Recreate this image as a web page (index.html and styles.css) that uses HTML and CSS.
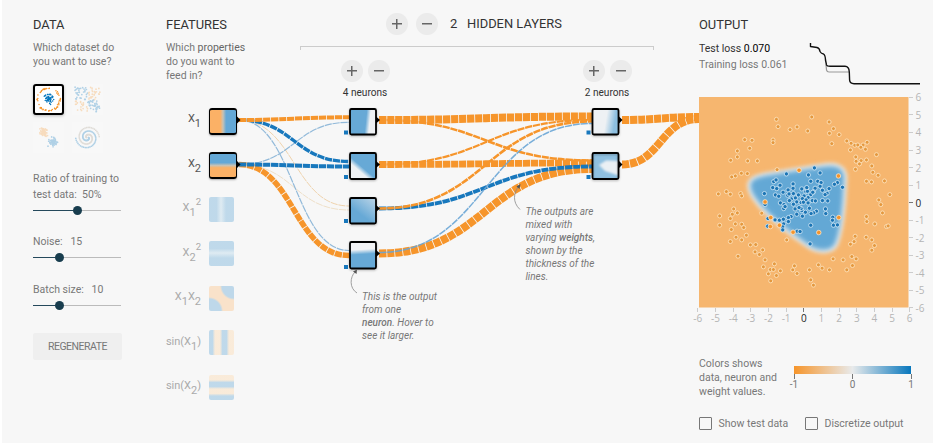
FILE: index.html
```html
<!DOCTYPE html>
<html lang="en">
<head>
<meta charset="utf-8">
<title>Neural network playground</title>
<link rel="stylesheet" href="styles.css">
</head>
<body>
<main class="playground">
  <section class="data">
    <h2>Data</h2>
    <p class="intro">Which dataset do<br>you want to use?</p>
    <div class="datasets">
      <svg class="thumb selected" data-set="circle" viewBox="0 0 31 31"></svg>
      <svg class="thumb" data-set="xor" viewBox="0 0 31 31"></svg>
      <svg class="thumb" data-set="gauss" viewBox="0 0 31 31"></svg>
      <svg class="thumb" data-set="spiral" viewBox="0 0 31 31"></svg>
    </div>
    <div class="control ratio">
      <label>Ratio of training to<br>test data:&nbsp; 50%</label>
      <div class="slider"><i class="fill half"></i><i class="knob"></i></div>
    </div>
    <div class="control noise">
      <label>Noise:&nbsp; &nbsp;15</label>
      <div class="slider"><i class="fill third"></i><i class="knob"></i></div>
    </div>
    <div class="control batch">
      <label>Batch size:&nbsp; &nbsp;10</label>
      <div class="slider"><i class="fill third"></i><i class="knob"></i></div>
    </div>
    <button class="regenerate">REGENERATE</button>
  </section>

  <section class="features">
    <h2>Features</h2>
    <p class="intro">Which <b>properties</b><br>do you want to<br>feed in?</p>
    <ul class="feature-list">
      <li class="on"><span>X<sub>1</sub></span><i class="tile x1"></i></li>
      <li class="on"><span>X<sub>2</sub></span><i class="tile x2"></i></li>
      <li><span>X<sub>1</sub><sup>2</sup></span><i class="tile x1sq"></i></li>
      <li><span>X<sub>2</sub><sup>2</sup></span><i class="tile x2sq"></i></li>
      <li><span>X<sub>1</sub>X<sub>2</sub></span><i class="tile x1x2"></i></li>
      <li><span>sin(X<sub>1</sub>)</span><i class="tile sin1"></i></li>
      <li><span>sin(X<sub>2</sub>)</span><i class="tile sin2"></i></li>
    </ul>
  </section>

  <section class="network">
    <div class="layers-head">
      <span class="round plus"></span><span class="round"></span>
      <span class="count">2</span><h2>Hidden layers</h2>
    </div>
    <div class="bracket"></div>
    <div class="layer-controls">
      <div class="layer"><div class="pair"><span class="round plus"></span><span class="round"></span></div><p>4 neurons</p></div>
      <div class="layer"><div class="pair"><span class="round plus"></span><span class="round"></span></div><p>2 neurons</p></div>
    </div>
  </section>

  <section class="output">
    <h2>Output</h2>
    <div class="loss">
      <div class="figures"><p class="test">Test loss <b>0.070</b></p><p class="train">Training loss 0.061</p></div>
      <svg class="loss-chart" viewBox="0 0 112 46">
        <path class="train-line" d="M18 24.500L18.500 30Q19 32 21 32H41"/>
        <path class="test-line" d="M2.500 3V6.500L9 7.500Q11.500 8 12 11.500Q13 13.500 15.500 14Q17.300 15 17.500 20L18.500 25Q19 26.300 22 26.300H37Q41 26.400 41.300 32L41.600 40Q41.900 43.700 46 43.700H112"/>
      </svg>
    </div>
    <div class="plot">
      <svg class="heatmap" viewBox="27 37 628 632" preserveAspectRatio="none">
        <defs>
          <filter id="soft" x="-20%" y="-20%" width="140%" height="140%"><feGaussianBlur stdDeviation="6"/></filter>
          <filter id="softer" x="-20%" y="-20%" width="140%" height="140%"><feGaussianBlur stdDeviation="8"/></filter>
        </defs>
        <rect x="27" y="37" width="628" height="632" fill="#f6b66f"/>
        <path class="edge" filter="url(#soft)" d="M181 303C180 286 200 278 228 273L400 246C442 240 462 252 462 280L458 350C453 410 447 450 434 480C422 500 392 500 366 488C318 457 253 406 213 362C196 340 182 325 181 303Z"/>
        <path class="zone" filter="url(#softer)" d="M181 303C180 286 200 278 228 273L400 246C442 240 462 252 462 280L458 350C453 410 447 450 434 480C422 500 392 500 366 488C318 457 253 406 213 362C196 340 182 325 181 303Z"/>
        <g id="points"></g>
      </svg>
      <div class="y-axis" id="y-axis"></div>
      <div class="x-axis" id="x-axis"></div>
    </div>
    <div class="legend">
      <p>Colors shows<br>data, neuron and<br>weight values.</p>
      <div class="scale"><div class="bar"></div><div class="marks"><span>-1</span><span>0</span><span>1</span></div></div>
    </div>
    <div class="options">
      <label><i class="box"></i>Show test data</label>
      <label><i class="box"></i>Discretize output</label>
    </div>
  </section>

  <svg class="diagram" viewBox="0 0 933 443">
    <defs>
      <linearGradient id="n1" x1="0" y1=".45" x2="1" y2=".55"><stop offset=".6" stop-color="#67a9d6"/><stop offset=".76" stop-color="#eef1f4"/></linearGradient>
      <linearGradient id="n2" x1=".15" y1=".9" x2=".75" y2=".2"><stop offset=".32" stop-color="#edf1f4"/><stop offset=".52" stop-color="#67a9d6"/></linearGradient>
      <linearGradient id="n3" x1=".3" y1="1" x2="1" y2=".1"><stop offset=".3" stop-color="#67a9d6"/><stop offset="1" stop-color="#b6d2e6"/></linearGradient>
      <linearGradient id="n4" x1=".47" y1="0" x2=".53" y2="1"><stop offset=".28" stop-color="#f2f3f5"/><stop offset=".46" stop-color="#67a9d6"/></linearGradient>
      <linearGradient id="m1" x1="0" y1=".42" x2="1" y2=".58"><stop offset=".5" stop-color="#eef1f4"/><stop offset=".85" stop-color="#8dbfe0"/></linearGradient>
      <filter id="blur"><feGaussianBlur stdDeviation="1.300"/></filter>
      <clipPath id="m2clip"><rect x="593" y="153" width="26" height="26"/></clipPath>
    </defs>
    <g id="links"></g>
    <g class="connectors">
      <path d="M237 116.500L240.500 120L237 123.500Z"/><path d="M237 161L240.500 164.500L237 168Z"/>
      <path d="M376 116.500L380 120L376 123.500Z"/><path d="M376 161L380 164.500L376 168Z"/>
      <path d="M376 205L380 208.500L376 212Z"/><path d="M376 250L380 253.500L376 257Z"/>
      <path d="M619 116.500L622.500 120L619 123.500Z"/><path d="M619 161L622.500 164.500L619 168Z"/>
    </g>
    <g class="nodes">
      <rect x="350" y="109" width="26" height="25.500" rx="1.500" fill="url(#n1)"/>
      <rect x="350" y="153" width="26" height="26" rx="1.500" fill="url(#n2)"/>
      <rect x="350" y="198" width="26" height="25.500" rx="1.500" fill="url(#n3)"/>
      <rect x="350" y="242" width="26" height="26.500" rx="1.500" fill="url(#n4)"/>
      <rect x="592.500" y="109" width="26" height="25.500" rx="1.500" fill="url(#m1)"/>
      <g clip-path="url(#m2clip)"><rect class="plain" x="592" y="152" width="28" height="28" fill="#8fc0e0"/><path d="M599 165L606 160.500L620 161V176L605 171Z" fill="#eaf0f4" filter="url(#blur)"/></g>
      <rect x="592.500" y="153" width="26" height="26" rx="1.500" fill="none"/>
    </g>
    <g class="biases">
      <rect x="344" y="130.500" width="4" height="4"/><rect x="344" y="175" width="4" height="4"/>
      <rect x="344" y="219" width="4" height="4"/><rect x="344" y="265" width="4" height="4"/>
      <rect x="586.500" y="130.500" width="4" height="4"/><rect x="586.500" y="175" width="4" height="4"/>
    </g>
    <g class="pointers">
      <path d="M357 293C349 288 350 277 355 272"/><path class="tip" d="M357 269.500L356.500 274L353 271.500Z"/>
      <path d="M520 209.500C512 202 514 193 518 187"/><path class="tip" d="M520.500 184L519.500 189L516.500 186.500Z"/>
    </g>
  </svg>
  <p class="callout neuron-note">This is the output<br>from one<br><b>neuron</b>. Hover to<br>see it larger.</p>
  <p class="callout weight-note">The outputs are<br>mixed with<br>varying <b>weights</b>,<br>shown by the<br>thickness of the<br>lines.</p>
</main>
<script src="script.js"></script>
</body>
</html>
```
FILE: styles.css
```css
* { box-sizing: border-box; }
body {
  margin: 0;
  background: #f7f7f7;
  color: #777;
  font: 10.500px/14px Roboto, "Liberation Sans", sans-serif;
}
h2, p, ul { margin: 0; padding: 0; }
h2 {
  color: #333;
  font-size: 12.900px;
  font-weight: 400;
  line-height: 16px;
  text-transform: uppercase;
}
b { font-weight: 500; }
i { display: block; }
.playground {
  position: relative;
  display: grid;
  grid-template-columns: 133px 134px 399px 234px;
  width: 933px;
  height: 443px;
  padding: 17px 0 0 31px;
  border-left: 2px solid #fff;
  overflow: hidden;
}
.network { width: 354px; }
.intro { margin-top: 8px; }
.features .intro b { font-weight: 400; color: #666; }

/* Data column */
.datasets {
  display: grid;
  grid-template-columns: 31px 31px;
  gap: 7px 8px;
  margin-top: 15px;
}
.thumb { width: 31px; height: 31px; opacity: .38; background: #fafafa; }
.thumb.selected {
  opacity: 1;
  background: #fff;
  border: 2px solid #000;
  border-radius: 3px;
  box-shadow: 0 1px 3px rgba(0, 0, 0, .25);
}
.control label { display: block; line-height: 16px; }
.ratio { margin-top: 18px; }
.noise { margin-top: 19px; }
.batch { margin-top: 20px; }
.slider {
  display: flex;
  align-items: center;
  width: 88px;
  height: 9px;
  margin-top: 3px;
  background: linear-gradient(#bbb, #bbb) center / 100% 1px no-repeat;
}
.fill { height: 1.5px; background: #25495c; }
.fill.half { width: 40px; }
.fill.third { width: 22px; }
.knob { width: 9px; height: 9px; border-radius: 50%; background: #183d4e; }
.regenerate {
  display: block;
  width: 89px;
  height: 27px;
  margin-top: 22.500px;
  padding: 0;
  border: 0;
  border-radius: 2px;
  background: #efefef;
  color: #777;
  font: 10.500px Roboto, sans-serif;
  letter-spacing: -.5px;
}

/* Features column */
.feature-list { list-style: none; width: 71px; margin-top: 16px; font-size: 11px; }
.feature-list li {
  display: flex;
  align-items: center;
  justify-content: flex-end;
  gap: 8px;
  height: 44.500px;
  padding-right: 3px;
  color: #aaa;
  white-space: nowrap;
}
.feature-list li.on { padding-right: 0; color: #555; }
.feature-list span { padding-bottom: 4px; }
sub, sup { font-size: 11px; line-height: 0; }
sub { vertical-align: -5px; }
sup { font-size: 9.500px; vertical-align: 6px; }
.tile { flex: none; width: 25px; height: 25px; margin-bottom: 2px; border-radius: 2px; opacity: .38; }
.on .tile {
  width: 28px;
  height: 27px;
  margin-bottom: 0;
  border: 1.500px solid #000;
  border-width: 2px 1.500px;
  border-radius: 3px;
  opacity: 1;
  box-shadow: 0 1px 2px rgba(0, 0, 0, .3);
}
.x1 { background: linear-gradient(90deg, #fbb166 40%, #c8c2b4 50%, #64a8d6 62%); }
.x2 { background: linear-gradient(#64a8d6 38%, #c8c2b4 50%, #fbb166 60%); }
.x1sq { background: linear-gradient(90deg, #64a8d6 30%, #b8d8ea 48%, #64a8d6 68%); }
.x2sq { background: linear-gradient(#64a8d6 30%, #b8d8ea 48%, #64a8d6 68%); }
.x1x2 {
  background:
    radial-gradient(circle at 0 100%, #64a8d6 12px, transparent 14px),
    radial-gradient(circle at 100% 0, #64a8d6 12px, transparent 14px),
    #fdc183;
}
.sin1 { background: linear-gradient(90deg, #64a8d6 14%, #fdd7a9 24% 44%, #64a8d6 54% 70%, #fdd7a9 80%); }
.sin2 { background: linear-gradient(#fdd7a9 20%, #64a8d6 30% 46%, #fdd7a9 56% 74%, #64a8d6 84%); }

/* Hidden layers */
.layers-head { display: flex; align-items: center; height: 22px; margin-top: -4px; padding-left: 86px; }
.layers-head .round + .round { margin-left: 8px; }
.count { width: 17px; margin-left: 12px; font-size: 13px; color: #333; }
.round {
  flex: none;
  width: 22px;
  height: 22px;
  border-radius: 50%;
  background: linear-gradient(#666, #666) center / 10px 1.500px no-repeat #ebebeb;
}
.round.plus {
  background:
    linear-gradient(#666, #666) center / 10px 1.500px no-repeat,
    linear-gradient(#666, #666) center / 1.500px 10px no-repeat,
    #ebebeb;
}
.bracket { height: 4px; margin-top: 11px; border: 1px solid #ccc; border-bottom: 0; }
.layer-controls { display: flex; justify-content: space-between; margin-top: 10px; padding: 0 12px 0 30px; }
.layer { width: 70px; text-align: center; color: #333; font-size: 10.100px; }
.pair { display: flex; justify-content: center; gap: 5px; margin-bottom: 4px; }

/* Diagram laid over the columns */
.diagram { position: absolute; left: -2px; top: 0; width: 933px; height: 443px; pointer-events: none; }
#links path { fill: none; stroke-dasharray: 7.200 .8; }
.nodes rect:not(.plain) { stroke: #000; stroke-width: 1.800; filter: drop-shadow(0 1px 1px rgba(0, 0, 0, .25)); }
.biases { fill: #1878bd; }
.pointers path { fill: none; stroke: #888; stroke-width: .8; }
.pointers .tip { fill: #555; stroke: none; }
.callout { position: absolute; font-size: 10px; line-height: 13.100px; font-style: italic; color: #777; white-space: nowrap; }
.neuron-note { left: 360px; top: 289.500px; }
.weight-note { left: 523.500px; top: 204.500px; }

/* Output column */
.loss { display: flex; height: 57px; margin-top: 8px; }
.figures { flex: none; width: 109px; line-height: 16px; white-space: nowrap; }
.test { color: #333; }
.test b { font-weight: 400; color: #000; }
.loss-chart { flex: none; width: 112px; height: 46px; margin-top: -1.500px; }
.loss-chart path { fill: none; stroke-linejoin: round; }
.test-line { stroke: #111; stroke-width: 1.400; }
.train-line { stroke: #999; stroke-width: 1.200; }
.plot { display: grid; grid-template-columns: 209.500px 25px; grid-template-rows: 210.500px 20px; margin-top: -.6px; }
.heatmap { width: 209.500px; height: 210.500px; }
.edge { fill: #eef0f1; stroke: #eef0f1; stroke-width: 18; }
.zone { fill: #64a8d5; }
.pt { stroke-width: 2.500; }
.pt.neg { fill: #e5993f; stroke: #fce4c2; }
.pt.hot { fill: #f5942c; stroke: #fbe3c4; }
.pt.pos { fill: #1c75b5; stroke: #cfe6f4; }
.y-axis, .x-axis { display: flex; justify-content: space-between; color: #b5b5b5; font: 10px/12px "Open Sans", sans-serif; }
.y-axis { flex-direction: column; margin: -6px 0; }
.y-axis span { display: flex; align-items: center; height: 12px; }
.y-axis span::before { content: ""; width: 4px; height: 1px; margin-right: 3px; background: #ccc; }
.x-axis { margin: 0 -10px; }
.x-axis span { width: 20px; text-align: center; }
.x-axis span::before { content: ""; display: block; width: 1px; height: 4px; margin: 0 auto; background: #ccc; }
.y-axis .zero, .x-axis .zero { color: #222; }
.zero::before { background: #777 !important; }
.legend { display: flex; height: 42px; margin-top: 28.600px; }
.legend p { flex: none; width: 95px; white-space: nowrap; }
.scale { flex: none; width: 117px; padding-top: 9px; }
.bar { height: 8px; background: linear-gradient(90deg, #f6952b, #e8eaeb 50%, #0877bd); }
.marks { display: flex; justify-content: space-between; margin: 0 -10px; font-size: 10px; line-height: 12px; }
.marks span { width: 20px; text-align: center; }
.marks span::before { content: ""; display: block; width: 1px; height: 5px; margin: 0 auto; background: #777; }
.options { display: flex; margin-top: 18px; }
.options label { display: flex; align-items: center; flex: none; width: 106px; white-space: nowrap; }
.box { width: 13px; height: 13px; margin-right: 6.500px; border: 1.500px solid #777; border-radius: 1px; }
```
FILE: script.js
```js
const NS = "http://www.w3.org/2000/svg";
function add(parent, tag, attrs) {
  const el = document.createElementNS(NS, tag);
  for (const k in attrs) el.setAttribute(k, attrs[k]);
  parent.appendChild(el);
}

// Links: x1, y1, x2, y2, width, colour, opacity
const O = "#f6952b", B = "#1878bd";
const links = [
  [239, 120, 349, 206, 1, "#ecc99a", .8], [239, 164.5, 349, 210, 1, "#ecd9bd", .8],
  [239, 120, 349, 250.5, 1.2, "#86b2d6", .9], [239, 164.5, 349, 122.3, 1.2, "#86b2d6", .9],
  [239, 120, 349, 161.5, 3.4, B, 1], [239, 120, 349, 117.3, 4, O, 1],
  [239, 164.5, 349, 255.5, 5.6, O, 1], [239, 164.5, 349, 166.5, 4, B, 1],
  [379, 120, 592, 160.5, 2.5, O, 1], [379, 164.5, 592, 120, 2.2, O, 1],
  [379, 120, 592, 116.5, 8, O, 1], [379, 164.5, 592, 163, 6.8, O, 1],
  [379, 253.5, 592, 169, 8, O, 1], [379, 208.5, 592, 166.5, 3.8, B, 1],
  [379, 208.5, 592, 121.5, 2.6, O, 1], [379, 252.5, 592, 123.5, 1.5, "#69a5d5", .9],
  [622, 120, 699, 117, 8, O, 1], [622, 164.5, 699, 119, 8, O, 1]
];
const linkLayer = document.getElementById("links");
for (const [x1, y1, x2, y2, w, c, o] of links) {
  const m = (x1 + x2) / 2;
  add(linkLayer, "path", { d: `M${x1} ${y1}C${m} ${y1} ${m} ${y2} ${x2} ${y2}`, stroke: c, "stroke-width": w, opacity: o });
}

// Sample points
const neg = "259 104,264 126,300 135,321 127,353 139,365 97,417 112,430 132,418 146,447 150,425 177,470 169,483 176,494 182,503 181,519 181,531 173,512 188,526 194,481 196,559 210,497 217,513 228,498 230,508 238,529 226,545 244,496 254,548 263,564 272,583 289,529 290,544 292,599 330,566 346,572 360,577 385,529 396,530 411,554 418,589 426,594 424,495 455,492 471,481 479,528 458,545 466,553 483,545 497,485 516,498 523,459 526,429 523,487 543,470 556,418 556,396 551,385 541,358 556,362 586,370 602,313 544,308 556,321 567,271 559,253 538,241 555,250 555,259 573,242 589,235 568,220 547,225 526,208 510,195 502,218 496,197 480,181 481,169 452,155 466,138 458,121 471,144 515,124 435,155 419,161 429,136 418,89 422,89 394,121 402,127 389,142 385,131 373,85 328,109 321,121 329,152 327,155 334,125 277,136 274,154 266,172 267,122 227,142 217,142 199,173 229,202 229,179 191,186 167,164 165,249 166,249 174,261 255,215 386,290 466".split(",");
const hot = "327 257,445 274,446 399,386 444,309 443,268 422,242 399,241 426,225 352".split(",");
const pos = "289 268,373 250,390 265,355 271,457 308,442 294,433 299,417 312,362 290,383 290,393 294,390 305,375 311,370 322,397 317,411 326,405 330,251 291,258 286,248 309,260 312,270 302,309 298,309 311,294 316,223 327,256 331,266 335,279 323,293 332,297 328,310 327,325 331,335 313,350 311,347 321,362 330,368 323,354 339,342 334,337 342,348 346,304 343,298 348,316 340,320 352,333 354,310 359,271 355,282 360,281 372,315 373,335 378,346 383,354 355,358 371,367 348,376 349,397 348,413 349,406 373,407 387,379 380,371 385,363 387,333 372,327 369,320 389,337 395,303 396,295 399,225 360,234 402,255 406,268 407,280 404,295 411,281 418,278 427,278 436,233 425,321 440,330 441,362 422,360 478,428 398,427 407,430 422,442 421,340 353,352 320,350 309,285 366".split(",");
const layer = document.getElementById("points");
for (const [cls, list, r] of [["neg", neg, 6], ["pos", pos, 6.4], ["hot", hot, 6.8]]) {
  for (const p of list) {
    const [cx, cy] = p.split(" ");
    add(layer, "circle", { class: "pt " + cls, cx, cy, r });
  }
}

// Axis labels
for (let i = -6; i <= 6; i++) {
  const x = document.createElement("span");
  x.textContent = i;
  const y = document.createElement("span");
  y.textContent = -i;
  if (i === 0) { x.className = "zero"; y.className = "zero"; y.textContent = "0"; }
  document.getElementById("x-axis").appendChild(x);
  document.getElementById("y-axis").appendChild(y);
}

// Dataset thumbnails
let seed = 7;
const rnd = () => (seed = (seed * 16807) % 2147483647) / 2147483647;
const gauss = () => rnd() + rnd() + rnd() - 1.5;
for (const svg of document.querySelectorAll(".thumb")) {
  const dot = (x, y, c) => add(svg, "circle", { cx: x, cy: y, r: .85, fill: c });
  for (let i = 0; i < 120; i++) {
    const a = rnd() * 6.283, s = i % 2;
    if (svg.dataset.set === "circle") {
      const r = s ? 12 + rnd() * 1.8 : rnd() * 6.5;
      dot(15.5 + r * Math.cos(a), 15.5 + r * Math.sin(a), s ? O : "#0877bd");
    } else if (svg.dataset.set === "xor") {
      const x = 3 + rnd() * 25, y = 3 + rnd() * 25;
      dot(x, y, (x > 15.5) === (y > 15.5) ? "#3f94cc" : "#f8b163");
    } else if (svg.dataset.set === "gauss") {
      dot((s ? 11 : 20) + gauss() * 4, (s ? 10 : 20) + gauss() * 4, s ? "#f8b163" : "#3f94cc");
    } else {
      const t = (i >> 1) / 60 * 9.5, r = 1 + t * 1.15, p = s ? Math.PI : 0;
      dot(15.5 + r * Math.cos(t + p), 15.5 + r * Math.sin(t + p), s ? "#b9b1a4" : "#3f94cc");
    }
  }
}
```
